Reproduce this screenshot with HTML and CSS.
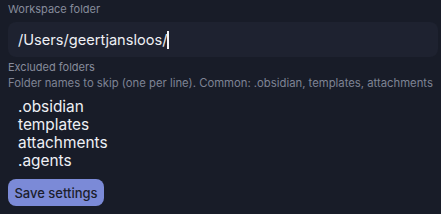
FILE: index.html
```html
<!DOCTYPE html>
<html>
<head>
<meta charset="utf-8">
<link rel="stylesheet" href="styles.css">
</head>
<body>
<div class="settings">
  <div class="label">Workspace folder</div>
  <div class="input"><span class="value">/Users/geertjansloos/</span><span class="caret"></span></div>
  <div class="label label-excl">Excluded folders</div>
  <div class="desc">Folder names to skip (one per line). Common: .obsidian, templates, attachments</div>
  <div class="textarea">
    <div>.obsidian</div>
    <div>templates</div>
    <div>attachments</div>
    <div>.agents</div>
  </div>
  <button class="save">Save settings</button>
</div>
</body>
</html>
```
FILE: styles.css
```css
html, body {
  margin: 0;
  padding: 0;
  background: #181c28;
  height: 100%;
}
body {
  font-family: Inter, "Noto Sans", sans-serif;
  color: #e8eaf0;
}
.settings {
  display: flex;
  flex-direction: column;
  align-items: flex-start;
  padding: 2px 3px 0 8px;
}
.label {
  font-size: 11px;
  line-height: 14px;
  color: #878c9c;
}
.input {
  align-self: stretch;
  margin-top: 6px;
  height: 35px;
  background: #1e2230;
  border-radius: 8px;
  display: flex;
  align-items: center;
  padding-left: 10px;
  font-size: 14.6px;
}
.value {
  color: #eef0f5;
}
.caret {
  display: inline-block;
  width: 1.5px;
  height: 18px;
  background: #f2f3f7;
}
.label-excl {
  margin-top: 3px;
}
.desc {
  font-size: 11.3px;
  line-height: 14px;
  margin-top: 2px;
  color: #7e8394;
  white-space: nowrap;
}
.textarea {
  margin-top: 8px;
  padding-left: 10px;
  font-size: 15.4px;
  line-height: 18px;
  color: #eef0f5;
}
.save {
  margin-top: 9px;
  width: 96px;
  height: 27px;
  border: none;
  border-radius: 8px;
  background: #7b8ad7;
  color: #1b1e2c;
  font-family: Inter, "Noto Sans", sans-serif;
  font-size: 13px;
  font-weight: 500;
  padding: 0;
}
```
